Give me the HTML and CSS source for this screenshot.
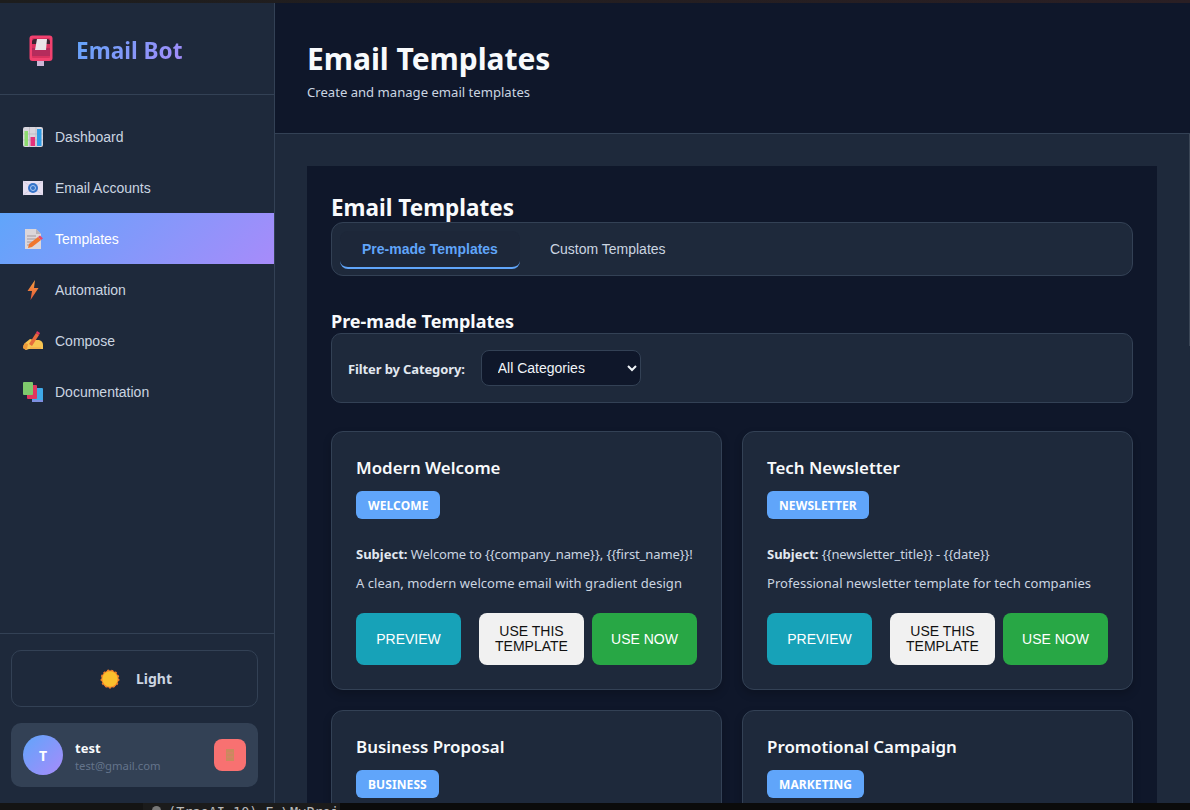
FILE: index.html
```html
<!DOCTYPE html>
<html lang="en">
<head>
<meta charset="utf-8">
<title>Email Templates</title>
<link rel="stylesheet" href="styles.css">
</head>
<body>
<div class="top-strip"></div>
<div class="app">
  <aside class="sidebar">
    <div class="brand">
      <svg class="brand-icon" viewBox="0 0 24 31" width="24" height="31">
        <rect x="8" y="25" width="7" height="6" fill="#cdb6d6"/>
        <rect x="0.500" y="0.500" width="23" height="25.500" rx="3" fill="#f2416f"/>
        <rect x="3" y="3" width="18" height="20" rx="1" fill="#d8325f"/>
        <rect x="3" y="13" width="18" height="8" fill="#b52c5c"/>
        <path d="M3 7q0-3 3-3h12q3 0 3 3v2H3z" fill="#3c2230"/>
        <path d="M8 4h10l-1 11H6z" fill="#e9e4e8"/>
      </svg>
      <span class="brand-name">Email Bot</span>
    </div>
    <nav class="nav">
      <a class="nav-item">
        <svg class="nav-icon" viewBox="0 0 20 20" width="20" height="20"><rect width="20" height="20" rx="2" fill="#d9d6de"/><path d="M0 7h20M0 13h20M6.500 0v20M13 0v20" stroke="#b9b6bf" stroke-width=".7"/><rect x="1.500" y="4" width="3.500" height="15" fill="#8ddb6f"/><rect x="7.500" y="10" width="4.500" height="9" fill="#e5327a"/><rect x="14" y="2" width="4.500" height="17" fill="#2f9de8"/></svg>
        <span>Dashboard</span>
      </a>
      <a class="nav-item">
        <svg class="nav-icon" viewBox="0 0 20 20" width="20" height="20"><rect y="3" width="20" height="14" fill="#e6dff0"/><path d="M0 3l10 7 10-7M0 17l10-7 10 7" fill="none" stroke="#cfc6de" stroke-width=".8"/><circle cx="10" cy="10" r="5" fill="#3674c9"/><circle cx="10" cy="10" r="2.500" fill="none" stroke="#a9c8f2" stroke-width="1"/></svg>
        <span>Email Accounts</span>
      </a>
      <a class="nav-item active">
        <svg class="nav-icon" viewBox="0 0 20 20" width="20" height="20"><path d="M2 0h11l5 5v15H2z" fill="#dcd6da"/><path d="M13 0l5 5h-5z" fill="#b9b2b8"/><path d="M4 7h9M4 10h9M4 13h6M4 16h3" stroke="#a39aa0" stroke-width="1"/><path d="M5 19l1-4 9-7 3 3-9 7z" fill="#f0762d"/><path d="M15 8l2-1.500 3 3L18 11z" fill="#e8476a"/></svg>
        <span>Templates</span>
      </a>
      <a class="nav-item">
        <svg class="nav-icon" viewBox="0 0 20 20" width="20" height="20"><defs><linearGradient id="bolt" x1="0" y1="0" x2="0" y2="1"><stop offset="0" stop-color="#f9a03f"/><stop offset="1" stop-color="#e5583a"/></linearGradient></defs><path d="M12 0L4.500 11H9l-1.500 9L15.500 8H11z" fill="url(#bolt)"/></svg>
        <span>Automation</span>
      </a>
      <a class="nav-item">
        <svg class="nav-icon" viewBox="0 0 20 20" width="20" height="20"><path d="M0 17q0-3 2-5l5-4 4 1h5q4 1 4 5v4H6l-3 1z" fill="#f8c552"/><path d="M0 17q0-3 2-5l3 1-1 5-1 1z" fill="#ee9a3a"/><path d="M6 13l7-11 3 2-7 11z" fill="#e76a3c"/><path d="M13 2l1-2 3 2-1 2z" fill="#e8365f"/><path d="M7 17h11" stroke="#f0a04a" stroke-width="1"/></svg>
        <span>Compose</span>
      </a>
      <a class="nav-item">
        <svg class="nav-icon" viewBox="0 0 20 20" width="20" height="20"><rect x="9" y="6" width="11" height="14" rx="1" fill="#3fa9e8"/><rect x="9" y="18" width="11" height="2" fill="#7d8fe0"/><rect x="4" y="3" width="10" height="14" rx="1" fill="#e0365f"/><rect x="0" y="0" width="10" height="13" rx="1" fill="#7fc96c"/></svg>
        <span>Documentation</span>
      </a>
    </nav>
    <div class="sidebar-footer">
      <button class="theme-toggle">
        <svg class="sun" viewBox="0 0 20 20" width="20" height="20"><circle cx="10" cy="10" r="8.700" fill="#f2812a" stroke="#f2812a" stroke-width="1.500" stroke-dasharray="2 2.200"/><circle cx="10" cy="10" r="7.700" fill="#fbc02d"/></svg>
        <span>Light</span>
      </button>
      <div class="user-card">
        <div class="avatar">T</div>
        <div class="user-info">
          <div class="user-name">test</div>
          <div class="user-email">test@gmail.com</div>
        </div>
        <button class="logout" aria-label="Log out">
          <svg viewBox="0 0 8 12" width="8" height="12"><rect width="8" height="12" fill="#c98a5e"/><path d="M1 4h6M1 8h6" stroke="#e07a6c" stroke-width="1"/></svg>
        </button>
      </div>
    </div>
  </aside>
  <main class="main">
    <header class="page-header">
      <h1>Email Templates</h1>
      <p>Create and manage email templates</p>
    </header>
    <div class="content">
      <div class="scroll-thumb"></div>
      <section class="panel">
        <h2>Email Templates</h2>
        <div class="tabs">
          <button class="tab active">Pre-made Templates</button>
          <button class="tab">Custom Templates</button>
        </div>
        <h3>Pre-made Templates</h3>
        <div class="filter">
          <label for="cat">Filter by Category:</label>
          <select id="cat"><option>All Categories</option></select>
        </div>
        <div class="cards">
          <article class="card">
            <h4>Modern Welcome</h4>
            <span class="tag">Welcome</span>
            <p class="subject"><strong>Subject:</strong> Welcome to {{company_name}}, {{first_name}}!</p>
            <p class="desc">A clean, modern welcome email with gradient design</p>
            <div class="actions">
              <button class="btn preview">Preview</button>
              <button class="btn use">Use this template</button>
              <button class="btn now">Use now</button>
            </div>
          </article>
          <article class="card">
            <h4>Tech Newsletter</h4>
            <span class="tag">Newsletter</span>
            <p class="subject"><strong>Subject:</strong> {{newsletter_title}} - {{date}}</p>
            <p class="desc">Professional newsletter template for tech companies</p>
            <div class="actions">
              <button class="btn preview">Preview</button>
              <button class="btn use">Use this template</button>
              <button class="btn now">Use now</button>
            </div>
          </article>
          <article class="card">
            <h4>Business Proposal</h4>
            <span class="tag">Business</span>
          </article>
          <article class="card">
            <h4>Promotional Campaign</h4>
            <span class="tag">Marketing</span>
          </article>
        </div>
      </section>
    </div>
  </main>
</div>
<div class="terminal">
  <div class="terminal-pane"><span class="terminal-dot"></span><span class="terminal-text">(TraeAI-10) E:\MyProject</span></div>
</div>
</body>
</html>
```

FILE: styles.css
```css
* { box-sizing: border-box; }
html, body { margin: 0; height: 810px; overflow: hidden; }
body {
  display: flex;
  flex-direction: column;
  background: #0f172a;
  font-family: "Noto Sans", "Open Sans", sans-serif;
  color: #f8fafc;
}
.top-strip { height: 3px; flex: none; background: linear-gradient(90deg, #1d1d1d, #2a1f24); }
.app { height: 800px; flex: none; display: flex; overflow: hidden; }

.sidebar {
  width: 275px;
  flex: none;
  display: flex;
  flex-direction: column;
  background: #1e293b;
  border-right: 1px solid #334155;
}
.brand {
  height: 92px;
  flex: none;
  display: flex;
  align-items: center;
  gap: 23px;
  padding: 3px 26px 0 29px;
  border-bottom: 1px solid #334155;
}
.brand-icon { flex: none; }
.brand-name {
  font-size: 22.600px;
  font-weight: 700;
  background: linear-gradient(135deg, #60a5fa, #a78bfa);
  -webkit-background-clip: text;
  background-clip: text;
  color: transparent;
}
.nav { flex: 1; padding: 16px 0; }
.nav-item {
  display: flex;
  align-items: center;
  gap: 12px;
  height: 51px;
  padding: 0 23px;
  font: 14px "Liberation Sans", Arial, sans-serif;
  color: #cbd5e1;
}
.nav-item.active { background: linear-gradient(135deg, #60a5fa, #a78bfa); color: #fff; }
.nav-icon { flex: none; }
.sidebar-footer {
  display: flex;
  flex-direction: column;
  gap: 16px;
  padding: 16px 16px 16px 11px;
  border-top: 1px solid #334155;
  height: 170px;
}
.theme-toggle {
  height: 57px;
  display: flex;
  align-items: center;
  justify-content: center;
  gap: 16px;
  background: transparent;
  border: 1px solid #334155;
  border-radius: 10px;
  color: #cbd5e1;
  font: 700 14px "Noto Sans", sans-serif;
  padding: 0 0 0 3px;
}
.user-card {
  height: 64px;
  display: flex;
  align-items: center;
  gap: 12px;
  padding: 0 12px;
  background: #334155;
  border-radius: 10px;
}
.avatar {
  width: 40px;
  height: 40px;
  flex: none;
  border-radius: 50%;
  display: flex;
  align-items: center;
  justify-content: center;
  background: linear-gradient(135deg, #60a5fa, #a78bfa);
  color: #fff;
  font-size: 14px;
  font-weight: 700;
}
.user-info { flex: 1; min-width: 0; padding-top: 4px; }
.user-name { font-size: 13px; font-weight: 700; color: #f8fafc; line-height: 18px; }
.user-email { font-size: 11.300px; color: #64748b; line-height: 18px; }
.logout {
  width: 32px;
  height: 32px;
  flex: none;
  display: flex;
  align-items: center;
  justify-content: center;
  padding: 0;
  border: 0;
  border-radius: 8px;
  background: #f87171;
}

.main { flex: 1; min-width: 0; display: flex; flex-direction: column; }
.page-header {
  height: 131px;
  flex: none;
  padding: 37px 32px 0;
  background: #0f172a;
  border-bottom: 1px solid #334155;
}
.page-header h1 { margin: 0; font-size: 30px; line-height: 38px; font-weight: 700; color: #f8fafc; letter-spacing: -.04px; }
.page-header p { margin: 5px 0 0; font-size: 13.100px; line-height: 18px; color: #cbd5e1; }
.content {
  position: relative;
  flex: 1;
  min-height: 0;
  padding: 32px 33px 0 32px;
  background: #1e293b;
  overflow: hidden;
}
.scroll-thumb { position: absolute; top: 0; right: 0; width: 1px; height: 212px; background: #3b4656; }
.panel { background: #0f172a; padding: 24px; min-height: 700px; }
.panel h2 { margin: 3px 0 0; font-size: 22.500px; line-height: 29px; font-weight: 700; color: #f8fafc; }
.tabs {
  height: 54px;
  display: flex;
  gap: 0;
  padding: 8px;
  background: #1e293b;
  border: 1px solid #334155;
  border-radius: 12px;
}
.tab {
  height: 38px;
  padding: 0 22px;
  background: transparent;
  border: 0;
  border-bottom: 2px solid transparent;
  border-radius: 8px;
  font: 14px "Liberation Sans", Arial, sans-serif;
  color: #cbd5e1;
}
.tab + .tab { margin-left: 8px; }
.tab.active { color: #60a5fa; font-weight: 700; background: #1d2739; border-bottom-color: #60a5fa; }
.panel h3 { margin: 34px 0 0; font-size: 18px; line-height: 23px; font-weight: 700; color: #f8fafc; }
.filter {
  height: 70px;
  display: flex;
  align-items: center;
  gap: 16px;
  padding: 0 16px;
  background: #1e293b;
  border: 1px solid #334155;
  border-radius: 10px;
}
.filter label { font-size: 13px; font-weight: 700; color: #e2e8f0; letter-spacing: -.12px; padding-top: 2px; }
.filter select {
  width: 160px;
  height: 36px;
  padding: 0 12px;
  background: #0f172a;
  border: 1px solid #334155;
  border-radius: 8px;
  color: #f1f5f9;
  font: 14px "Liberation Sans", Arial, sans-serif;
}
.cards { display: grid; grid-template-columns: 391px 391px; gap: 20px; margin-top: 28px; }
.card {
  height: 259px;
  padding: 24px;
  background: #1e293b;
  border: 1px solid #334155;
  border-radius: 12px;
  box-shadow: 0 4px 8px rgba(0, 0, 0, .2);
}
.card h4 { margin: 0; font-size: 16.900px; line-height: 24px; font-weight: 600; color: #f8fafc; }
.tag {
  display: inline-block;
  margin-top: 11px;
  height: 28px;
  line-height: 29px;
  padding: 0 12px;
  border-radius: 6px;
  background: #60a5fa;
  color: #fff;
  font-size: 12px;
  font-weight: 700;
  letter-spacing: .1px;
  text-transform: uppercase;
}
.subject { margin: 25px 0 0; font-size: 13px; line-height: 20px; color: #cbd5e1; white-space: nowrap; letter-spacing: -.11px; }
.subject strong { color: #e2e8f0; letter-spacing: 0; }
.desc { margin: 9px 0 0; font-size: 13px; line-height: 20px; color: #cbd5e1; white-space: nowrap; letter-spacing: .05px; }
.actions { display: flex; gap: 8px; margin-top: 20px; }
.btn {
  width: 105px;
  height: 52px;
  padding: 0 8px;
  border: 0;
  border-radius: 8px;
  font: 14px/15px "Liberation Sans", Arial, sans-serif;
  text-transform: uppercase;
}
.preview { background: #17a2b8; color: #fff; margin-right: 10px; }
.use { background: #f1f1f1; color: #111; }
.now { background: #28a745; color: #fff; }
.terminal {
  height: 7px;
  flex: none;
  background: #0b0b0b;
  overflow: hidden;
}
.terminal-pane {
  position: relative;
  width: 340px;
  height: 7px;
  padding: 2px 0 0 168px;
  overflow: hidden;
  white-space: nowrap;
  background: linear-gradient(90deg, #141414 143px, #1b1b1b 143px);
  font: 13.500px/14px "DejaVu Sans Mono", monospace;
  color: #b8b8b8;
}
.terminal-dot {
  position: absolute;
  left: 152px;
  top: 3px;
  width: 9px;
  height: 9px;
  border-radius: 50%;
  background: #777;
}
```
